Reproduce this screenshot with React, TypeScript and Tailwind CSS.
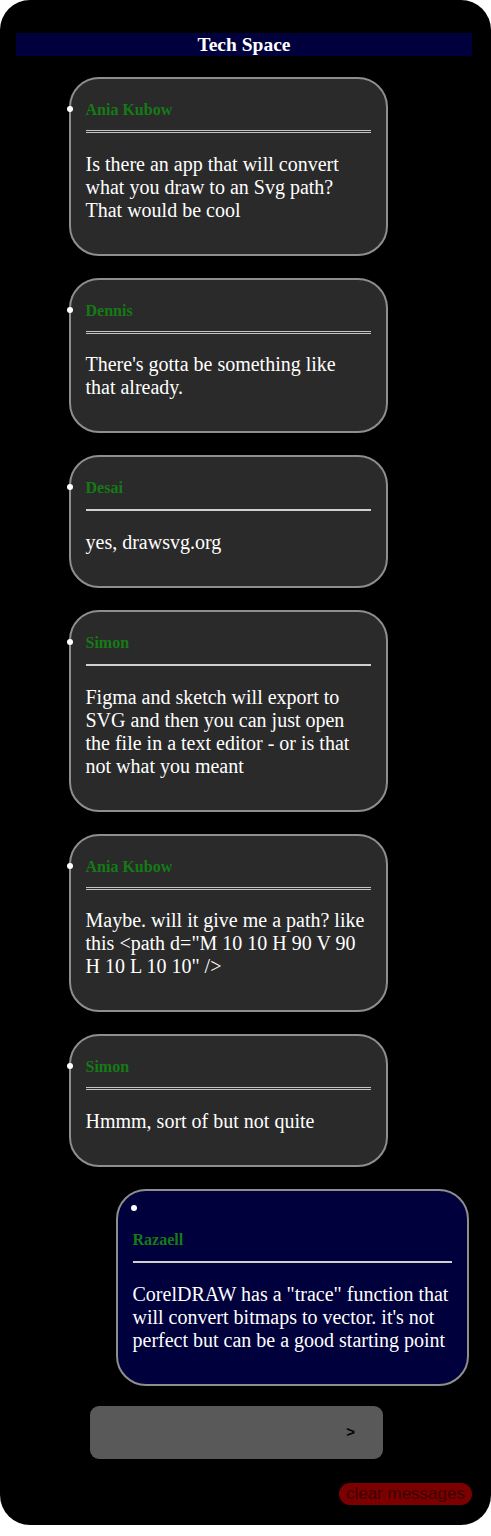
import React from "react";

type Msg = { name: string; text: string; me?: boolean; double?: boolean };

const messages: Msg[] = [
  { name: "Ania Kubow", text: "Is there an app that will convert what you draw to an Svg path? That would be cool", double: true },
  { name: "Dennis", text: "There's gotta be something like that already.", double: true },
  { name: "Desai", text: "yes, drawsvg.org" },
  { name: "Simon", text: "Figma and sketch will export to SVG and then you can just open the file in a text editor - or is that not what you meant" },
  { name: "Ania Kubow", text: 'Maybe. will it give me a path? like this <path d="M 10 10 H 90 V 90 H 10 L 10 10" />', double: true },
  { name: "Simon", text: "Hmmm, sort of but not quite", double: true },
  { name: "Razaell", text: 'CorelDRAW has a "trace" function that will convert bitmaps to vector. it\'s not perfect but can be a good starting point', me: true },
];

function Card({ m }: { m: Msg }) {
  return (
    <div
      className={
        m.me
          ? "relative ml-[115.5px] w-[353px] rounded-[30px] border-2 border-[#8e8e8e] bg-[#00003d] px-[15px] pt-[40px] pb-[32.2px]"
          : "relative ml-[68.5px] w-[319px] rounded-[30px] border-2 border-[#8e8e8e] bg-[#2a2a2a] px-[15px] pt-[22px] pb-[32.2px]"
      }
    >
      <span
        className={
          m.me
            ? "absolute left-[13.5px] top-[14px] h-[6px] w-[6px] rounded-full bg-white"
            : "absolute left-[-3.5px] top-[27px] h-[6px] w-[6px] rounded-full bg-white"
        }
      />
      <div className="text-[16px] font-bold leading-[18px] text-[#157a15]">{m.name}</div>
      {m.double ? (
        <div className="mt-[11px] h-[3px] border-y border-[#c4c4c4]" />
      ) : (
        <div className="mt-[11.5px] h-[2px] bg-[#d0d0d0]" />
      )}
      <p className={m.double ? "mt-[19.5px] text-[20px] leading-[23px] text-white" : "mt-[20px] text-[20px] leading-[23px] text-white"}>
        {m.text}
      </p>
    </div>
  );
}

export default function App() {
  return (
    <div className="min-h-[1536px] bg-white" style={{ fontFamily: '"Liberation Serif", "Times New Roman", serif' }}>
      <div className="flex flex-col rounded-[30px] bg-black pt-[33px] pb-[20px]">
        <div className="mx-[16px] w-[456px] bg-[#00003d] text-center text-[19.5px] font-bold leading-[23px] text-white">
          Tech Space
        </div>
        <div className="mt-[21px] flex flex-col gap-[22px]">
          {messages.map((m, i) => (
            <Card key={i} m={m} />
          ))}
        </div>
        <div className="mt-[20px] ml-[90px] flex h-[53px] w-[293px] items-center justify-end rounded-[9px] bg-[#595959] pr-[28px]">
          <span
            className="text-[15px] font-bold text-black"
            style={{ fontFamily: '"Liberation Sans", Arial, sans-serif' }}
          >
            &gt;
          </span>
        </div>
        <div className="mt-[24px] flex justify-end pr-[19px]">
          <div
            className="rounded-full bg-[#7d0000] px-[7px] text-[17px] leading-[22px] text-[#3c0000]"
            style={{ fontFamily: '"Liberation Sans", Arial, sans-serif' }}
          >
            clear messages
          </div>
        </div>
      </div>
    </div>
  );
}
